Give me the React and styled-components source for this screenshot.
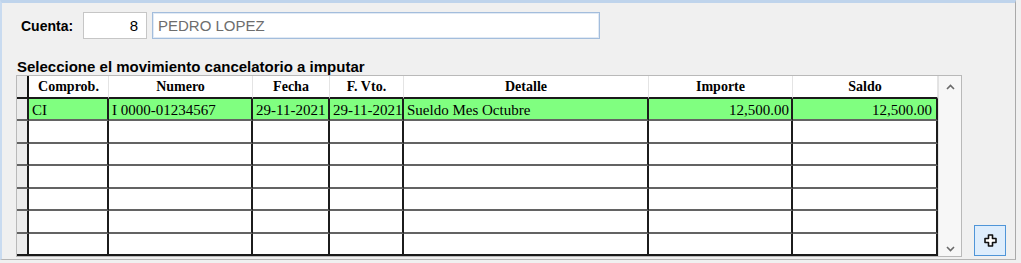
import React from "react";
import styled, { createGlobalStyle } from "styled-components";

const Global = createGlobalStyle`
  body {
    margin: 0;
    background: #f0f0f0;
    font-family: "Liberation Sans", Arial, sans-serif;
  }
`;

// Panel ======================================
const Panel = styled.div`
  box-sizing: border-box;
  width: 1016px;
  height: 260px;
  background: #f0f0f0;
  border-top: 3px solid #bfd4ec;
  border-left: 2px solid #c9dbf0;
  border-right: 1px solid #a9a9a9;
  border-bottom: 1px solid #b4b4b4;
  padding: 9px 0 0 14px;
`;

const AccountRow = styled.div`
  display: flex;
  align-items: center;
  height: 27px;
  padding-left: 5px;
`;

const Label = styled.span`
  width: 62px;
  font-size: 14px;
  font-weight: bold;
  color: #000;
`;

const Box = styled.div`
  box-sizing: border-box;
  height: 27px;
  width: ${p => p.width}px;
  margin-left: ${p => p.gap || 0}px;
  display: flex;
  align-items: center;
  justify-content: ${p => (p.right ? "flex-end" : "flex-start")};
  padding: 0 ${p => (p.right ? 8 : 0)}px 0 ${p => (p.right ? 0 : 5)}px;
  background: #fff;
  border: 1px solid ${p => (p.active ? "#a3bddc" : "#c6c6c6")};
  box-shadow: ${p => (p.active ? "inset 0 0 0 1px #e1eaf5" : "none")};
  font-size: 15px;
  color: ${p => (p.muted ? "#6d6d6d" : "#000")};
`;

const Caption = styled.div`
  margin: 21px 0 1px 1px;
  height: 14px;
  line-height: 14px;
  font-size: 15px;
  font-weight: bold;
  color: #000;
`;

// Grid ========================================
const Bottom = styled.div`
  display: flex;
  align-items: flex-end;
`;

const Frame = styled.div`
  display: flex;
  border: 1px solid #b9b9b9;
  background: #fff;
`;

const Grid = styled.div`
  display: grid;
  grid-template-columns: 12px 80px 144px 77px 74px 245px 144px 145px;
  grid-template-rows: 23px repeat(7, 22.43px);
  font-family: "Liberation Serif", "Times New Roman", serif;
  color: #000;
`;

const Head = styled.div`
  box-sizing: border-box;
  display: flex;
  align-items: center;
  justify-content: center;
  background: ${p => (p.corner ? "#ececec" : "#fff")};
  border-right: ${p => (p.corner ? "2px solid #111" : "1px solid #e4e4e4")};
  border-bottom: 2px solid #1a1a1a;
  font-size: 14px;
  font-weight: bold;
  white-space: nowrap;
`;

const Cell = styled.div`
  box-sizing: border-box;
  display: flex;
  align-items: flex-end;
  justify-content: ${p => (p.num ? "flex-end" : "flex-start")};
  padding: 0 ${p => (p.wide ? 4 : 2)}px 0 3px;
  background: ${p => (p.gutter ? "#ececec" : p.picked ? "#80ff80" : "#fff")};
  border-right: 2px solid #1c1c1c;
  border-bottom: 2px solid ${p => (p.last ? "#1a1a1a" : "#636363")};
  font-size: 15px;
  white-space: nowrap;
  overflow: hidden;
`;

const Scroll = styled.div`
  width: 23px;
  display: flex;
  flex-direction: column;
  justify-content: space-between;
  align-items: center;
  padding: 8px 0 4px;
  box-sizing: border-box;
  background: #f7f7f7;
  border-left: 1px solid #e2e2e2;
`;

const AddButton = styled.button`
  box-sizing: border-box;
  width: 32px;
  height: 31px;
  margin: 0 0 1px 12px;
  padding: 0;
  display: flex;
  align-items: center;
  justify-content: center;
  background: #deedfc;
  border: 1px solid #4f95d8;
  border-radius: 0;
`;

const Chevron = ({ up }) => (
  <svg width="9" height="6" viewBox="0 0 9 6">
    <path
      d={up ? "M1 5 L4.5 1.5 L8 5" : "M1 1 L4.5 4.5 L8 1"}
      fill="none"
      stroke="#6a6a6a"
      strokeWidth="1.6"
    />
  </svg>
);

const PlusIcon = () => (
  <svg width="13" height="13" viewBox="0 0 13 13">
    <path
      d="M4.5 1 H8.5 V4.5 H12 V8.5 H8.5 V12 H4.5 V8.5 H1 V4.5 H4.5 Z"
      fill="#fff"
      stroke="#111"
      strokeWidth="1.6"
      strokeLinejoin="round"
    />
  </svg>
);

const headers = ["Comprob.", "Numero", "Fecha", "F. Vto.", "Detalle", "Importe", "Saldo"];
const numeric = [false, false, false, false, false, true, true];
const rows = [
  ["CI", "I 0000-01234567", "29-11-2021", "29-11-2021", "Sueldo Mes Octubre", "12,500.00", "12,500.00"],
  ...Array.from({ length: 6 }, () => ["", "", "", "", "", "", ""]),
];

export default function App() {
  return (
    <>
      <Global />
      <Panel>
        <AccountRow>
          <Label>Cuenta:</Label>
          <Box width={64} right>8</Box>
          <Box width={448} gap={5} active muted>PEDRO LOPEZ</Box>
        </AccountRow>
        <Caption>Seleccione el movimiento cancelatorio a imputar</Caption>
        <Bottom>
          <Frame>
            <Grid>
              <Head corner />
              {headers.map(h => (
                <Head key={h}>{h}</Head>
              ))}
              {rows.map((r, i) => (
                <React.Fragment key={i}>
                  <Cell gutter last={i === rows.length - 1} />
                  {r.map((v, j) => (
                    <Cell
                      key={j}
                      num={numeric[j]}
                      wide={j === 6}
                      picked={i === 0}
                      last={i === rows.length - 1}
                    >
                      {v}
                    </Cell>
                  ))}
                </React.Fragment>
              ))}
            </Grid>
            <Scroll>
              <Chevron up />
              <Chevron />
            </Scroll>
          </Frame>
          <AddButton>
            <PlusIcon />
          </AddButton>
        </Bottom>
      </Panel>
    </>
  );
}
